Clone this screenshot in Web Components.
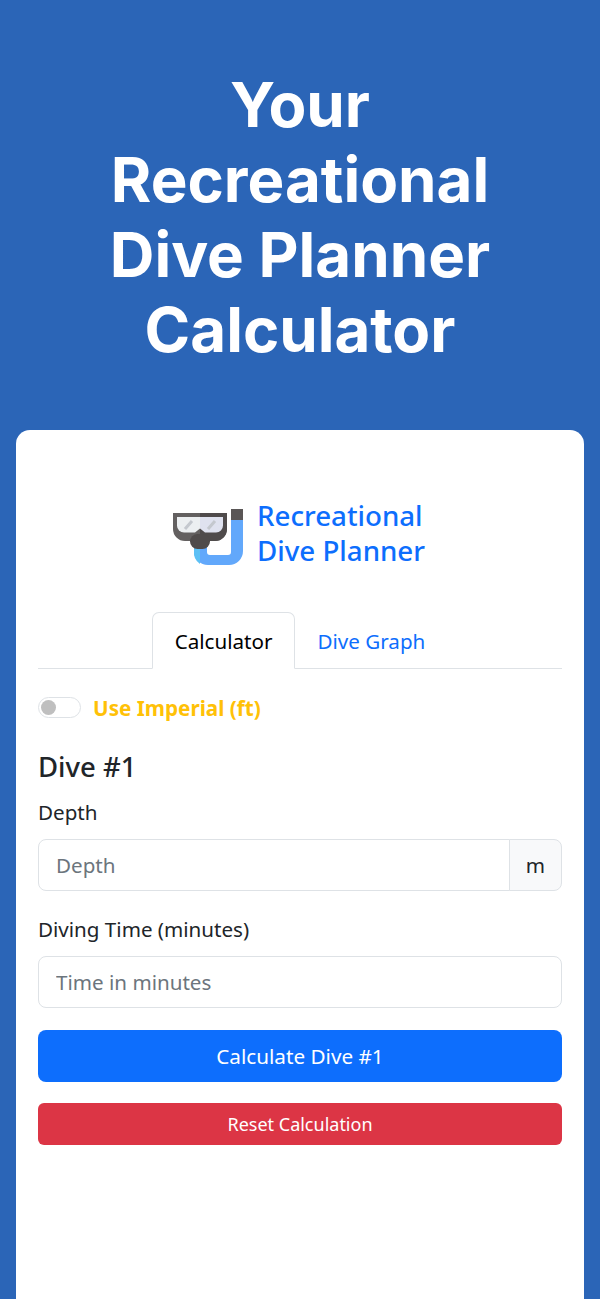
<!DOCTYPE html>
<html lang="en">
<head>
<meta charset="utf-8">
<title>Recreational Dive Planner</title>
<style>
    html, body { margin: 0; background: #2b65b7; }
    body { font-family: "Noto Sans", "Open Sans", sans-serif; }
</style>
</head>
<body>
<dive-hero>Your Recreational Dive Planner Calculator</dive-hero>
<dive-card>
    <dive-logo></dive-logo>
    <dive-tabs></dive-tabs>
    <dive-switch>Use Imperial (ft)</dive-switch>
    <h2 style="margin:0 0 14px;font-size:27.5px;line-height:32px;font-weight:500;color:#212529">Dive #1</h2>
    <dive-field label="Depth" placeholder="Depth" unit="m"></dive-field>
    <dive-field label="Diving Time (minutes)" placeholder="Time in minutes"></dive-field>
    <dive-button>Calculate Dive #1</dive-button>
    <dive-button small color="#dc3545">Reset Calculation</dive-button>
</dive-card>

<script>
class DiveHero extends HTMLElement {
    constructor() {
        super();
        this.attachShadow({ mode: 'open' }).innerHTML = `
            <style>
                :host { display: block; box-sizing: border-box; height: 430px; padding: 67px 60px 0; }
                h1 {
                    margin: 0;
                    font: 700 61.800px/75px Inter, sans-serif;
                    color: #fff;
                    text-align: center;
                }
            </style>
            <h1><slot></slot></h1>
        `;
    }
}

class DiveCard extends HTMLElement {
    constructor() {
        super();
        this.attachShadow({ mode: 'open' }).innerHTML = `
            <style>
                :host {
                    display: block;
                    box-sizing: border-box;
                    margin: 0 16px;
                    height: 869px;
                    padding: 62px 22px 0;
                    background: #fff;
                    border-radius: 14px 14px 0 0;
                    color: #212529;
                }
            </style>
            <slot></slot>
        `;
    }
}

class DiveLogo extends HTMLElement {
    constructor() {
        super();
        this.attachShadow({ mode: 'open' }).innerHTML = `
            <style>
                :host { display: flex; justify-content: center; align-items: flex-start; gap: 14px; height: 120px; padding-right: 2px; }
                svg { margin-top: 16px; flex: none; }
                .name { padding-top: 6px; font-size: 27.7px; font-weight: 500; line-height: 35px; color: #0d6efd; }
                .name div { height: 35px; }
            </style>
            <svg width="70" height="58" viewBox="0 0 70 58">
                <path d="M58 12h12v31a14 14 0 0 1-14 14H35a14 14 0 0 1-14-14v-6h13v7a3 3 0 0 0 3 3h18a3 3 0 0 0 3-3z" fill="#62a8fb"/>
                <path d="M21 37h6v19a14 14 0 0 1-6-13z" fill="#5cc0f5"/>
                <rect x="58" y="1" width="12" height="11" fill="#5a5656"/>
                <path d="M0 5h54v16a12 12 0 0 1-12 12h-6l-9-2-9 2h-6A12 12 0 0 1 0 21z" fill="#636060"/>
                <path d="M27 5h27v16a12 12 0 0 1-12 12h-6l-9-2z" fill="#4f4b4b"/>
                <path d="M4 9h23v11.500l-5 4h-11a7 7 0 0 1-7-7z" fill="#eceff1"/>
                <path d="M27 9h23v8.500a7 7 0 0 1-7 7h-11l-5-4z" fill="#dfe2ef"/>
                <path d="M12 21l7-8M35 21l7-8" stroke="#c4c8ce" stroke-width="3"/>
                <rect x="17" y="26" width="20" height="15" rx="7.500" fill="#4f4b4b"/>
            </svg>
            <div class="name"><div>Recreational</div><div>Dive Planner</div></div>
        `;
    }
}

class DiveTabs extends HTMLElement {
    constructor() {
        super();
        this.attachShadow({ mode: 'open' }).innerHTML = `
            <style>
                :host {
                    display: flex;
                    justify-content: center;
                    height: 57px;
                    box-sizing: border-box;
                    border-bottom: 1px solid #dee2e6;
                    font-size: 20.6px;
                    margin-bottom: 26px;
                }
                a {
                    display: block;
                    box-sizing: border-box;
                    height: 57px;
                    padding: 0 21.5px;
                    line-height: 56px;
                    border: 1px solid transparent;
                    border-radius: 7px 7px 0 0;
                    color: #0d6efd;
                }
                a.active { color: #000; background: #fff; border-color: #dee2e6 #dee2e6 #fff; }
            </style>
            <a class="active">Calculator</a>
            <a>Dive Graph</a>
        `;
    }
}

class DiveSwitch extends HTMLElement {
    constructor() {
        super();
        this.attachShadow({ mode: 'open' }).innerHTML = `
            <style>
                :host { display: flex; align-items: center; gap: 12px; height: 24px; margin-bottom: 32px; }
                i {
                    display: block;
                    position: relative;
                    width: 43px;
                    height: 21px;
                    box-sizing: border-box;
                    border: 1px solid #dee2e6;
                    border-radius: 11px;
                }
                i::after {
                    content: '';
                    position: absolute;
                    left: 2px;
                    top: 2px;
                    width: 15px;
                    height: 15px;
                    border-radius: 50%;
                    background: #bfbfbf;
                }
                span { padding-top: 2px; font-size: 20.7px; font-weight: 700; color: #ffc107; }
            </style>
            <i></i><span><slot></slot></span>
        `;
    }
}

class DiveField extends HTMLElement {
    constructor() {
        super();
        const unit = this.getAttribute('unit');
        this.attachShadow({ mode: 'open' }).innerHTML = `
            <style>
                :host { display: block; margin-bottom: 23.5px; }
                :host(:last-of-type) { margin-bottom: 22.500px; }
                label { display: block; font-size: 20.6px; line-height: 30px; margin-bottom: 12px; color: #212529; }
                .group { display: flex; height: 51.5px; }
                input {
                    flex: 1;
                    min-width: 0;
                    box-sizing: border-box;
                    padding: 0 17px;
                    font: 20.6px "Noto Sans", "Open Sans", sans-serif;
                    color: #212529;
                    background: #fff;
                    border: 1px solid #dee2e6;
                    border-radius: 8px;
                    outline: none;
                }
                input::placeholder { color: #6c757d; opacity: 1; }
                .joined { border-radius: 8px 0 0 8px; }
                .unit {
                    display: flex;
                    align-items: center;
                    box-sizing: border-box;
                    padding: 0 16px;
                    margin-left: -1px;
                    font-size: 20.6px;
                    color: #212529;
                    background: #f8f9fa;
                    border: 1px solid #dee2e6;
                    border-radius: 0 8px 8px 0;
                }
            </style>
            <label>${this.getAttribute('label')}</label>
            <div class="group">
                <input type="text" class="${unit ? 'joined' : ''}" placeholder="${this.getAttribute('placeholder')}">
                ${unit ? `<span class="unit">${unit}</span>` : ''}
            </div>
        `;
    }
}

class DiveButton extends HTMLElement {
    constructor() {
        super();
        const small = this.hasAttribute('small');
        this.attachShadow({ mode: 'open' }).innerHTML = `
            <style>
                :host { display: block; margin-bottom: 21.5px; }
                button {
                    display: block;
                    width: 100%;
                    height: ${small ? 42 : 51.5}px;
                    padding: 0;
                    font: ${small ? 18 : 20.7}px "Noto Sans", "Open Sans", sans-serif;
                    color: #fff;
                    background: ${this.getAttribute('color') || '#0d6efd'};
                    border: 0;
                    border-radius: ${small ? 6 : 8}px;
                }
            </style>
            <button><slot></slot></button>
        `;
    }
}

customElements.define('dive-hero', DiveHero);
customElements.define('dive-card', DiveCard);
customElements.define('dive-logo', DiveLogo);
customElements.define('dive-tabs', DiveTabs);
customElements.define('dive-switch', DiveSwitch);
customElements.define('dive-field', DiveField);
customElements.define('dive-button', DiveButton);
</script>
</body>
</html>
